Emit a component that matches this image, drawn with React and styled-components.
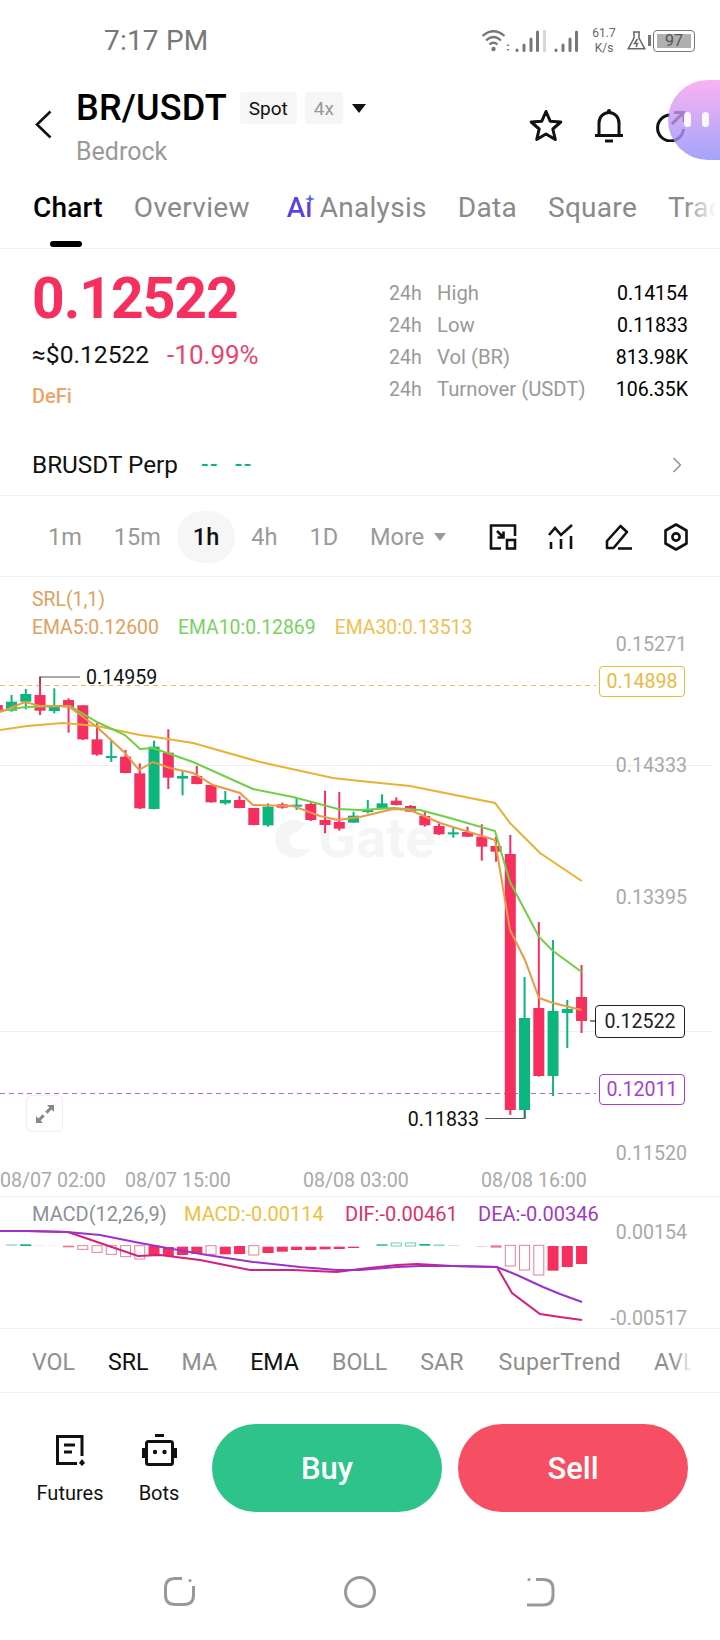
import React from 'react';
import styled, { createGlobalStyle } from 'styled-components';

const GlobalStyle = createGlobalStyle`
  html, body {
    margin: 0;
    padding: 0;
    background: #fff;
  }

  body {
    font-family: Roboto, "Liberation Sans", sans-serif;
    color: #111;
  }

  * {
    box-sizing: border-box;
  }
`;

const RED = '#f72f5e';
const GREEN = '#0cb57e';

const zoomY = (v) => 580 + v / 3;
const candleX = (i) => -2.7 + i * 14.25;

// wick top, body top, body bottom, wick bottom (in 3x crop units), colour
const CANDLES = [
  [375, 375, 392, 392, 'r'], [345, 365, 392, 395, 'g'], [327, 342, 365, 388, 'g'],
  [290, 345, 392, 405, 'r'], [325, 375, 393, 400, 'g'], [355, 360, 382, 458, 'r'],
  [375, 376, 478, 480, 'r'], [430, 478, 524, 527, 'r'], [483, 528, 534, 546, 'g'],
  [510, 530, 579, 580, 'r'], [550, 580, 685, 687, 'r'], [482, 500, 687, 688, 'g'],
  [448, 518, 593, 627, 'r'], [572, 588, 596, 646, 'g'], [558, 588, 612, 613, 'r'],
  [615, 615, 667, 668, 'r'], [633, 660, 670, 674, 'g'], [648, 660, 684, 685, 'r'],
  [684, 684, 735, 736, 'r'], [670, 680, 736, 740, 'g'], [668, 673, 683, 686, 'r'],
  [652, 674, 680, 690, 'g'], [668, 672, 720, 723, 'r'], [632, 720, 735, 760, 'r'],
  [636, 726, 746, 752, 'r'], [695, 707, 728, 728, 'g'], [660, 690, 696, 700, 'g'],
  [643, 670, 686, 688, 'g'], [652, 662, 675, 676, 'r'], [675, 678, 695, 696, 'r'],
  [695, 708, 736, 740, 'r'], [725, 738, 763, 765, 'r'], [742, 757, 761, 773, 'g'],
  [740, 756, 770, 771, 'r'], [733, 770, 800, 842, 'r'], [770, 798, 815, 845, 'r'],
  [765, 822, 1590, 1605, 'r'], [1191, 1314, 1590, 1614, 'g'], [1026, 1284, 1488, 1490, 'r'],
  [1080, 1293, 1488, 1548, 'g'], [1260, 1287, 1299, 1404, 'g'], [1155, 1251, 1323, 1359, 'r'],
];

const pts = (list) => list.map(([x, y]) => `${x},${y}`).join(' ');

const EMA30 = [
  [0, 730], [27, 726], [63, 723], [97, 726], [140, 735], [155, 737], [193, 743], [260, 762],
  [333, 778], [360, 781], [410, 786], [495, 803], [510, 823], [540, 853], [581.7, 881],
];
const EMA10 = [
  [0, 711], [25, 707], [70, 706], [97, 722], [125, 735], [140, 749], [153, 748], [193, 762],
  [233, 780], [253, 789], [293, 797], [338, 809], [360, 810], [393, 808], [420, 810], [450, 818],
  [495, 831], [510, 882], [539, 937], [553, 951], [581.7, 972],
];
const EMA5 = [
  [0, 712], [25, 702], [40, 706], [68, 706], [97, 727], [125, 753], [139, 770], [153, 762],
  [170, 768], [193, 773], [213, 785], [240, 793], [253, 805], [293, 806], [320, 816], [338, 820],
  [360, 817], [393, 809], [410, 810], [440, 823], [495, 840], [510, 930], [525, 960], [539, 998],
  [553, 1003], [581.7, 1010],
];

// bar index, top, bottom (in 3x crop units from y=1060), hollow, colour
const MACD_BARS = [
  [1, 554, 556, 0, GREEN], [2, 553, 558, 0, GREEN], [3, 555, 557, 0, '#e8e8e8'], [4, 555, 557, 0, '#e8e8e8'],
  [5, 557, 562, 0, '#e87a90'], [6, 557, 568, 1], [7, 557, 577, 1], [8, 557, 583, 1], [9, 557, 590, 1],
  [10, 557, 597, 1], [11, 557, 585, 0], [12, 561, 588, 0], [13, 560, 585, 0], [14, 560, 582, 0],
  [15, 557, 583, 1], [16, 560, 583, 0], [17, 558, 582, 0], [18, 557, 585, 1], [19, 560, 579, 0],
  [20, 560, 575, 0], [21, 560, 570, 0], [22, 560, 570, 0], [23, 560, 568, 0], [24, 560, 567, 0],
  [25, 560, 564, 0], [27, 553, 557, 0, GREEN], [28, 549, 558, 1, '#6fd0ae'], [29, 549, 558, 1, '#6fd0ae'],
  [30, 552, 557, 0, GREEN], [31, 554, 557, 0, '#45c79c'], [32, 555, 557, 0, '#a9e2cf'], [34, 558, 560, 0, '#efb3c0'],
  [35, 556, 563, 0, '#e87a90'], [36, 556, 618, 1], [37, 556, 630, 1], [38, 556, 645, 1],
  [39, 558, 632, 0], [40, 558, 621, 0], [41, 558, 612, 0],
];

const DIF = [
  [0, 1231], [27, 1231], [68, 1232], [100, 1243], [138, 1256], [160, 1255], [200, 1260], [250, 1270],
  [293, 1270], [337, 1272], [360, 1269], [397, 1265], [417, 1264], [453, 1266], [497, 1267],
  [512, 1293], [540, 1314], [560, 1317], [582, 1320],
];
const DEA = [
  [0, 1231], [27, 1231], [67, 1232], [100, 1235], [140, 1243], [167, 1248], [207, 1255], [253, 1262],
  [300, 1267], [337, 1270], [360, 1270], [397, 1267], [420, 1266], [453, 1266], [497, 1267],
  [517, 1275], [543, 1287], [560, 1294], [582, 1302],
];

const PRICE_LABELS = [
  ['0.15271', 644], ['0.14333', 765], ['0.13395', 897], ['0.11520', 1153],
];
const TIME_LABELS = [
  ['08/07 02:00', 0], ['08/07 15:00', 125], ['08/08 03:00', 303], ['08/08 16:00', 481],
];

const STATS = [
  ['High', '0.14154'],
  ['Low', '0.11833'],
  ['Vol (BR)', '813.98K'],
  ['Turnover (USDT)', '106.35K'],
];

const App = () => {
  return (
    <Page>
      <GlobalStyle />

      <StatusBar>
        <Clock>7:17 PM</Clock>
        <StatusIcons>
          <WifiIcon />
          <SignalIcon />
          <SignalDivider />
          <SignalIcon />
          <Speed>
            <span>61.7</span>
            <span>K/s</span>
          </Speed>
          <FlaskIcon />
          <Battery>
            <BatteryFill>97</BatteryFill>
          </Battery>
        </StatusIcons>
      </StatusBar>

      <Header>
        <BackIcon />
        <TitleBlock>
          <TitleRow>
            <Title>BR/USDT</Title>
            <Chip>Spot</Chip>
            <Chip $muted>4x</Chip>
            <Caret $size={7} $gap={1} $color='#111' />
          </TitleRow>
          <Subtitle>Bedrock</Subtitle>
        </TitleBlock>
        <HeaderActions>
          <StarIcon />
          <BellIcon />
          <ShareIcon />
        </HeaderActions>
        <Bubble>
          <i />
          <i />
        </Bubble>
      </Header>

      <Tabs>
        <Tab $active>Chart</Tab>
        <Tab>Overview</Tab>
        <Tab $ai>
          <AiMark>
            Aı
            <AiSparkle viewBox='0 0 10 10'>
              <path d='M5 0 L6.2 3.8 L10 5 L6.2 6.2 L5 10 L3.8 6.2 L0 5 L3.8 3.8 Z' />
            </AiSparkle>
          </AiMark>
          Analysis
        </Tab>
        <Tab>Data</Tab>
        <Tab>Square</Tab>
        <Tab>Trade</Tab>
      </Tabs>

      <Summary>
        <PriceBlock>
          <Price>0.12522</Price>
          <PriceSub>
            <span>≈$0.12522</span>
            <Change>-10.99%</Change>
          </PriceSub>
          <Sector>DeFi</Sector>
        </PriceBlock>
        <Stats>
          {STATS.map(([name, value]) => (
            <React.Fragment key={name}>
              <StatLabel>24h</StatLabel>
              <StatName>{name}</StatName>
              <StatValue>{value}</StatValue>
            </React.Fragment>
          ))}
        </Stats>
      </Summary>

      <PerpRow>
        <PerpName>BRUSDT Perp</PerpName>
        <PerpDash>--</PerpDash>
        <PerpDash>--</PerpDash>
        <PerpChevron viewBox='0 0 10 16'>
          <path d='M1.5 1 L8.5 8 L1.5 15' />
        </PerpChevron>
      </PerpRow>

      <Timeframes>
        <Frame>1m</Frame>
        <Frame>15m</Frame>
        <Frame $active>1h</Frame>
        <Frame>4h</Frame>
        <Frame>1D</Frame>
        <Frame>
          More
          <Caret $size={6} $gap={10} $color='#999' />
        </Frame>
        <ChartTools>
          <FitIcon />
          <IndicatorIcon />
          <PenIcon />
          <HexIcon />
        </ChartTools>
      </Timeframes>

      <ChartPane>
        <Legend>
          <LegendLine>
            <LegendItem $color='#e0a05e'>SRL(1,1)</LegendItem>
          </LegendLine>
          <LegendLine>
            <LegendItem $color='#e0a05e'>EMA5:0.12600</LegendItem>
            <LegendItem $color='#78d25f'>EMA10:0.12869</LegendItem>
            <LegendItem $color='#efc14f'>EMA30:0.13513</LegendItem>
          </LegendLine>
        </Legend>

        <ChartSvg viewBox='0 577 720 619'>
          <line x1='0' y1='765.5' x2='712' y2='765.5' stroke='#eeeeee' />
          <line x1='0' y1='1031.5' x2='712' y2='1031.5' stroke='#eeeeee' />

          <g fill='#f4f5f6'>
            <path d='M306 824 A19 19 0 1 0 310 849 L298 849 A8 8 0 1 1 297 832 Z' />
            <text x='318' y='857' fontSize='56' fontWeight='700' fontFamily='Roboto, sans-serif'>Gate</text>
          </g>

          {PRICE_LABELS.map(([label, y]) => (
            <AxisText key={label} x='687' y={y} textAnchor='end' dominantBaseline='central'>{label}</AxisText>
          ))}
          {TIME_LABELS.map(([label, x]) => (
            <AxisText key={label} x={x} y='1180' dominantBaseline='central'>{label}</AxisText>
          ))}

          <line x1='0' y1='685.5' x2='596' y2='685.5' stroke='#eebb48' strokeWidth='1' strokeDasharray='5 4' />
          <line x1='0' y1='1093.5' x2='596' y2='1093.5' stroke='#b565d8' strokeWidth='1' strokeDasharray='5 4' />

          {CANDLES.map(([wt, bt, bb, wb, c], i) => {
            const x = candleX(i);
            const color = c === 'r' ? RED : GREEN;
            return (
              <g key={i} fill={color}>
                <rect x={x - 1} y={zoomY(wt)} width='2' height={(wb - wt) / 3} />
                <rect x={x - 5.5} y={zoomY(bt)} width='11' height={Math.max((bb - bt) / 3, 2)} />
              </g>
            );
          })}

          <polyline points={pts(EMA30)} fill='none' stroke='#e9b235' strokeWidth='2' />
          <polyline points={pts(EMA10)} fill='none' stroke='#6fd044' strokeWidth='2' />
          <polyline points={pts(EMA5)} fill='none' stroke='#ea9a45' strokeWidth='2' />

          <path d='M40 684 V677 H80' fill='none' stroke='#555' strokeWidth='1.2' />
          <DarkText x='86' y='677' dominantBaseline='central'>0.14959</DarkText>
          <path d='M525 1110 V1118.5 H485' fill='none' stroke='#555' strokeWidth='1.2' />
          <DarkText x='479' y='1119' textAnchor='end' dominantBaseline='central'>0.11833</DarkText>
          <line x1='590' y1='1021' x2='595' y2='1021' stroke='#333' strokeWidth='1.2' />
        </ChartSvg>

        <PriceTag $top={89} $left={599} $color='#e8bb3f'>0.14898</PriceTag>
        <PriceTag $top={428} $left={595} $width={90} $color='#222'>0.12522</PriceTag>
        <PriceTag $top={497} $left={599} $color='#a63fd0'>0.12011</PriceTag>

        <ExpandButton>
          <svg width='20' height='20' viewBox='0 0 20 20' fill='#888'>
            <path d='M12 1 H19 V8 L16.6 5.6 L12.4 9.8 L10.2 7.6 L14.4 3.4 Z' />
            <path d='M8 19 H1 V12 L3.4 14.4 L7.6 10.2 L9.8 12.4 L5.6 16.6 Z' />
          </svg>
        </ExpandButton>
      </ChartPane>

      <MacdPane>
        <Legend $top={3}>
          <LegendLine>
            <LegendItem $size={20} $color='#8b9197' $width={152}>MACD(12,26,9)</LegendItem>
            <LegendItem $size={20} $color='#eec03e' $width={161}>MACD:-0.00114</LegendItem>
            <LegendItem $size={20} $color='#d9316c' $width={133}>DIF:-0.00461</LegendItem>
            <LegendItem $size={20} $color='#a139c2'>DEA:-0.00346</LegendItem>
          </LegendLine>
        </Legend>
        <ChartSvg viewBox='0 1197 720 131'>
          <AxisText x='687' y='1232' textAnchor='end' dominantBaseline='central'>0.00154</AxisText>
          <AxisText x='687' y='1318' textAnchor='end' dominantBaseline='central'>-0.00517</AxisText>

          {MACD_BARS.map(([i, top, bottom, hollow, color]) => {
            const x = candleX(i);
            const y = 1060 + top / 3;
            const h = (bottom - top) / 3;
            return hollow ? (
              <rect key={i} x={x - 5} y={y} width='10' height={h} fill='#fff' stroke={color || '#e58195'} strokeWidth='1' />
            ) : (
              <rect key={i} x={x - 5.5} y={y} width='11' height={h} fill={color || RED} />
            );
          })}

          <polyline points={pts(DIF)} fill='none' stroke='#d4207f' strokeWidth='2' />
          <polyline points={pts(DEA)} fill='none' stroke='#9c33c9' strokeWidth='2' />
        </ChartSvg>
      </MacdPane>

      <Indicators>
        <Indicator>VOL</Indicator>
        <Indicator $active>SRL</Indicator>
        <Indicator>MA</Indicator>
        <Indicator $active>EMA</Indicator>
        <Indicator>BOLL</Indicator>
        <Indicator>SAR</Indicator>
        <Indicator $wide>SuperTrend</Indicator>
        <Indicator>AVL</Indicator>
      </Indicators>

      <ActionBar>
        <ToolLink $width={66} $gap={37}>
          <svg width='32' height='32' viewBox='0 0 32 32' fill='none' stroke='#111' strokeWidth='3'>
            <path d='M28 22 V2.5 H3.5 V29.5 H23' />
            <path d='M10 11 H21 M10 18 H18' />
            <path d='M28 25 L31 29 L28 32 L25 29 Z' fill='#111' stroke='none' />
          </svg>
          <span>Futures</span>
        </ToolLink>
        <ToolLink $width={38} $gap={34}>
          <svg width='35' height='32' viewBox='0 0 35 32' fill='none' stroke='#111' strokeWidth='3'>
            <path d='M13 1.5 H22' />
            <rect x='4.5' y='7.5' width='26' height='23' rx='2' />
            <path d='M1.5 14 V24 M33.5 14 V24' />
            <circle cx='13' cy='18' r='2.2' fill='#111' stroke='none' />
            <circle cx='22.5' cy='18' r='2.2' fill='#111' stroke='none' />
          </svg>
          <span>Bots</span>
        </ToolLink>
        <TradeButton $color='#2dc38a'>Buy</TradeButton>
        <TradeButton $color='#f64f63'>Sell</TradeButton>
      </ActionBar>

      <NavBar>
        <NavIcon viewBox='0 0 34 32'>
          <path d='M19 2.5 H12 Q2.5 2.5 2.5 12 V19 Q2.5 28.5 12 28.5 H21 Q30.5 28.5 30.5 19 V10' />
          <circle cx='27' cy='4.5' r='1.5' fill='#999' stroke='none' />
        </NavIcon>
        <NavIcon viewBox='0 0 34 32'>
          <circle cx='17' cy='16' r='14.5' />
        </NavIcon>
        <NavIcon viewBox='0 0 34 32'>
          <path d='M13 3.5 H20 Q30 3.5 30 13 V19 Q30 29 20 29 H4' />
          <circle cx='6' cy='3.5' r='1.5' fill='#999' stroke='none' />
        </NavIcon>
      </NavBar>
    </Page>
  );
};

const WifiIcon = () => (
  <svg width='29' height='23' viewBox='0 0 29 23' fill='none' stroke='#777' strokeWidth='2.2'>
    <path d='M0.5 7 Q11.5 -2.5 22.5 7' />
    <path d='M4 11.5 Q11.5 4.5 19 11.5' />
    <path d='M7.5 15.5 Q11.5 12 15.5 15.5' />
    <circle cx='11.5' cy='20' r='2.2' fill='#777' stroke='none' />
    <path d='M26 15 L27.5 17 H24.5 Z M26 22 L27.5 20 H24.5 Z' fill='#777' stroke='none' />
  </svg>
);

const SignalIcon = () => (
  <svg width='24' height='22' viewBox='0 0 24 22' fill='none' stroke='#777' strokeWidth='3' strokeLinecap='round'>
    <path d='M2 20 V20.5 M9 15 V20.5 M16 9 V20.5 M22.5 2 V20.5' />
  </svg>
);

const FlaskIcon = () => (
  <svg width='19' height='19' viewBox='0 0 19 19' fill='none' stroke='#666' strokeWidth='1.5' style={{ marginRight: 3 }}>
    <path d='M6 1 H13 M7 1 V7 L1.2 17.8 H17.8 L12 7 V1' />
    <path d='M10.5 8 L7.5 12.5 H10.5 L9 16' />
  </svg>
);

const BackIcon = () => (
  <svg width='17' height='29' viewBox='0 0 17 29' fill='none' stroke='#111' strokeWidth='2.6' style={{ marginTop: 18, flexShrink: 0 }}>
    <path d='M15.5 1.5 L2 14.5 L15.5 27.5' />
  </svg>
);

const StarIcon = () => (
  <svg width='34' height='33' viewBox='0 0 34 33' fill='none' stroke='#111' strokeWidth='3' strokeLinejoin='round'>
    <path d='M17 2.5 L21.2 12.2 L31.8 13 L23.8 20 L26.3 30.5 L17 25 L7.7 30.5 L10.2 20 L2.2 13 L12.8 12.2 Z' />
  </svg>
);

const BellIcon = () => (
  <svg width='30' height='35' viewBox='0 0 30 35' fill='none' stroke='#111' strokeWidth='3'>
    <path d='M1 27.5 H29' />
    <path d='M5 27.5 V15 A10 10.5 0 0 1 25 15 V27.5' />
    <path d='M11 33 H19' />
    <circle cx='15' cy='3' r='2' fill='#111' stroke='none' />
  </svg>
);

const ShareIcon = () => (
  <svg width='32' height='32' viewBox='0 0 32 32' fill='none' stroke='#111' strokeWidth='3'>
    <path d='M15 5 A13 13 0 1 0 28.5 19' />
    <path d='M17 14 L28 3 M19 2.5 H29 V12' />
  </svg>
);

const FitIcon = () => (
  <svg width='28' height='26' viewBox='0 0 28 26' fill='none' stroke='#111' strokeWidth='2.6'>
    <path d='M12 24.5 H2 V1.5 H26 V12' />
    <path d='M8 7 L14 13 M14.5 7.5 V13.5 H8.5' />
    <rect x='18' y='16' width='8' height='8.5' />
  </svg>
);

const IndicatorIcon = () => (
  <svg width='28' height='26' viewBox='0 0 28 26' fill='none' stroke='#111' strokeWidth='2.6'>
    <path d='M2 11 L8 4 L14 11 L25 1' />
    <path d='M4 18 V25 M14 15 V25 M24 12 V25' />
  </svg>
);

const PenIcon = () => (
  <svg width='28' height='26' viewBox='0 0 28 26' fill='none' stroke='#111' strokeWidth='2.6' strokeLinejoin='round'>
    <path d='M2 24 V17 L15.5 2 L22 8 L8.5 24 Z' />
    <path d='M13 24.5 H27' />
  </svg>
);

const HexIcon = () => (
  <svg width='26' height='28' viewBox='0 0 26 28' fill='none' stroke='#111' strokeWidth='2.6' strokeLinejoin='round'>
    <path d='M13 1.5 L23.5 7.5 V20.5 L13 26.5 L2.5 20.5 V7.5 Z' />
    <circle cx='13' cy='14' r='3.6' />
  </svg>
);

const Page = styled.div`
  width: 720px;
  height: 1640px;
  overflow: hidden;
  background: #fff;
`;

const StatusBar = styled.div`
  display: flex;
  align-items: center;
  height: 75px;
  padding: 6px 25px 0 104px;
  color: #777;
`;

const Clock = styled.div`
  font-size: 28px;
  letter-spacing: 0.2px;
`;

const StatusIcons = styled.div`
  display: flex;
  align-items: center;
  margin-left: auto;
  gap: 4px;
`;

const SignalDivider = styled.span`
  width: 3px;
  height: 22px;
  margin: 0 4px 0 0;
  background: #d8d8d8;
`;

const Speed = styled.div`
  display: flex;
  flex-direction: column;
  align-items: center;
  width: 36px;
  margin: 0 1px 0 4px;
  font-size: 12px;
  line-height: 15px;
  color: #666;
`;

const Battery = styled.div`
  display: flex;
  width: 42px;
  height: 22px;
  padding: 3px;
  border: 1.5px solid #777;
  border-radius: 4px;
  position: relative;

  &::before {
    content: '';
    position: absolute;
    left: -6px;
    top: 4px;
    width: 3px;
    height: 11px;
    background: #777;
  }
`;

const BatteryFill = styled.div`
  flex: 1;
  background: #b0b0b0;
  font-size: 16px;
  line-height: 14px;
  text-align: center;
  color: #555;
`;

const Header = styled.div`
  display: flex;
  position: relative;
  height: 95px;
  padding: 17px 33px 0 35px;
`;

const TitleBlock = styled.div`
  margin-left: 24px;
`;

const TitleRow = styled.div`
  display: flex;
  align-items: center;
  height: 32px;
`;

const Title = styled.h1`
  margin: 0 13px 0 0;
  font-size: 36px;
  font-weight: 500;
  line-height: 32px;
  letter-spacing: 0.2px;
  color: #000;
`;

const Chip = styled.span`
  display: flex;
  align-items: center;
  height: 32px;
  margin-right: 8px;
  padding: 0 9px;
  background: #f6f6f6;
  border-radius: 3px;
  font-size: 19px;
  color: ${(p) => (p.$muted ? '#999' : '#111')};
`;

const Caret = styled.span`
  display: inline-block;
  width: 0;
  height: 0;
  margin-left: ${(p) => p.$gap}px;
  border-left: ${(p) => p.$size}px solid transparent;
  border-right: ${(p) => p.$size}px solid transparent;
  border-top: ${(p) => p.$size + 2}px solid ${(p) => p.$color};
  vertical-align: middle;
`;

const Subtitle = styled.div`
  margin-top: 14px;
  font-size: 25px;
  line-height: 28px;
  color: #999;
`;

const HeaderActions = styled.div`
  display: flex;
  align-items: center;
  gap: 31px;
  height: 35px;
  margin: 16px 0 0 auto;
`;

const Bubble = styled.div`
  position: absolute;
  right: 0;
  top: 5px;
  display: flex;
  align-items: center;
  gap: 11px;
  width: 52px;
  height: 80px;
  padding-left: 16px;
  border-radius: 40px 0 0 40px;
  background: linear-gradient(180deg, rgba(247, 160, 238, 0.8), rgba(140, 142, 250, 0.8));

  i {
    width: 7px;
    height: 15px;
    margin-top: -1px;
    border-radius: 4px;
    background: rgba(255, 255, 255, 0.9);
  }
`;

const Tabs = styled.div`
  display: flex;
  position: relative;
  align-items: center;
  gap: 31px;
  height: 79px;
  padding: 0 0 3px 33px;
  border-bottom: 1px solid #f2f2f2;
  overflow: hidden;
  white-space: nowrap;

  &::after {
    content: '';
    position: absolute;
    right: 0;
    top: 0;
    bottom: 0;
    width: 36px;
    background: linear-gradient(90deg, rgba(255, 255, 255, 0), #fff 90%);
  }
`;

const Tab = styled.div`
  display: flex;
  position: relative;
  align-items: center;
  flex-shrink: 0;
  margin-left: ${(p) => (p.$ai ? '6px' : '0')};
  font-size: 28px;
  font-weight: ${(p) => (p.$active ? 500 : 400)};
  letter-spacing: ${(p) => (p.$active ? '0.2px' : '0.3px')};
  color: ${(p) => (p.$active ? '#000' : '#8a8a8a')};

  &::after {
    content: '';
    display: ${(p) => (p.$active ? 'block' : 'none')};
    position: absolute;
    left: 17px;
    bottom: -23px;
    width: 32px;
    height: 6px;
    border-radius: 3px;
    background: #000;
  }
`;

const AiMark = styled.span`
  position: relative;
  margin-right: 7px;
  font-weight: 500;
  letter-spacing: 0;
  background: linear-gradient(135deg, #4f46e5, #6d3adf);
  -webkit-background-clip: text;
  background-clip: text;
  color: transparent;
`;

const AiSparkle = styled.svg`
  position: absolute;
  right: -2px;
  top: 3px;
  width: 10px;
  height: 10px;
  fill: #4d6ae8;
`;

const Summary = styled.div`
  display: flex;
  justify-content: space-between;
  height: 186px;
  padding: 20px 32px 0;
`;

const PriceBlock = styled.div`
  display: flex;
  flex-direction: column;
`;

const Price = styled.div`
  font-size: 57px;
  font-weight: 700;
  line-height: 60px;
  letter-spacing: -1px;
  color: ${RED};
`;

const PriceSub = styled.div`
  display: flex;
  align-items: center;
  gap: 18px;
  margin-top: 12px;
  font-size: 24.6px;
  line-height: 28px;
`;

const Change = styled.span`
  font-size: 26px;
  color: #e8466f;
`;

const Sector = styled.div`
  margin-top: 15px;
  font-size: 20px;
  line-height: 24px;
  font-weight: 500;
  color: #eca568;
`;

const Stats = styled.div`
  display: grid;
  grid-template-columns: 48px 1fr auto;
  grid-auto-rows: 32px;
  align-items: center;
  width: 299px;
  margin-top: 8px;
  font-size: 19.5px;
`;

const StatLabel = styled.span`
  color: #999;
`;

const StatName = styled.span`
  font-size: 20.3px;
  white-space: nowrap;
  color: #999;
`;

const StatValue = styled.span`
  text-align: right;
  color: #000;
`;

const PerpRow = styled.div`
  display: flex;
  align-items: center;
  gap: 16px;
  height: 61px;
  padding: 0 38px 1px 32px;
  border-bottom: 1px solid #f2f2f2;
`;

const PerpName = styled.span`
  margin-right: 7px;
  font-size: 24.3px;
`;

const PerpDash = styled.span`
  font-size: 22px;
  font-weight: 500;
  letter-spacing: 1.5px;
  color: ${GREEN};
`;

const PerpChevron = styled.svg`
  width: 10px;
  height: 16px;
  margin-left: auto;
  fill: none;
  stroke: #888;
  stroke-width: 1.3;
`;

const Timeframes = styled.div`
  display: flex;
  align-items: center;
  gap: 0;
  height: 81px;
  padding: 1px 31px 0 32px;
  border-bottom: 1px solid #f2f2f2;
`;

const Frame = styled.div`
  display: flex;
  align-items: center;
  height: 52px;
  padding: 0 16px;
  border-radius: 26px;
  font-size: 23.5px;
  font-weight: ${(p) => (p.$active ? 500 : 400)};
  color: ${(p) => (p.$active ? '#111' : '#999')};
  background: ${(p) => (p.$active ? '#f6f6f6' : 'transparent')};
`;

const ChartTools = styled.div`
  display: flex;
  align-items: center;
  gap: 30px;
  margin-left: auto;
`;

const ChartPane = styled.div`
  position: relative;
  height: 620px;
  border-bottom: 1px solid #efefef;
`;

const ChartSvg = styled.svg`
  display: block;
  width: 100%;
  height: 100%;
  overflow: visible;
`;

const AxisText = styled.text`
  font-size: 19.6px;
  fill: #a9a9a9;
`;

const DarkText = styled.text`
  font-size: 19.6px;
  fill: #111;
`;

const Legend = styled.div`
  position: absolute;
  left: 32px;
  top: ${(p) => p.$top ?? 8}px;
  z-index: 1;
`;

const LegendLine = styled.div`
  display: flex;
  gap: 19px;
  height: 28px;
  align-items: center;
`;

const LegendItem = styled.span`
  ${(p) => p.$width && `width: ${p.$width}px; margin-right: -19px;`}
  font-size: ${(p) => p.$size ?? 19.4}px;
  white-space: nowrap;
  color: ${(p) => p.$color};
`;

const PriceTag = styled.div`
  position: absolute;
  top: ${(p) => p.$top}px;
  left: ${(p) => p.$left}px;
  display: flex;
  align-items: center;
  justify-content: center;
  width: ${(p) => p.$width ?? 86}px;
  height: ${(p) => (p.$width ? 33 : 31)}px;
  background: #fff;
  border: 1px solid ${(p) => p.$color};
  border-radius: 4px;
  font-size: 19.6px;
  color: ${(p) => p.$color};
`;

const ExpandButton = styled.div`
  position: absolute;
  left: 26px;
  top: 518px;
  display: flex;
  align-items: center;
  justify-content: center;
  width: 37px;
  height: 37px;
  background: #fff;
  border: 1px solid #f0f0f0;
  border-radius: 6px;
  box-shadow: 0 0 2px rgba(0, 0, 0, 0.05);
`;

const MacdPane = styled.div`
  position: relative;
  height: 132px;
  border-bottom: 1px solid #f2f2f2;
`;

const Indicators = styled.div`
  display: flex;
  position: relative;
  align-items: center;
  gap: 33px;
  height: 64px;
  padding: 2px 0 0 32px;
  border-bottom: 1px solid #f2f2f2;
  overflow: hidden;
  white-space: nowrap;

  &::after {
    content: '';
    position: absolute;
    right: 0;
    top: 0;
    bottom: 0;
    width: 46px;
    background: linear-gradient(90deg, rgba(255, 255, 255, 0), #fff 40%);
  }
`;

const Indicator = styled.span`
  margin-left: ${(p) => (p.$wide ? '2px' : '0')};
  font-size: 23.2px;
  letter-spacing: ${(p) => (p.$wide ? '0.4px' : '0')};
  color: ${(p) => (p.$active ? '#111' : '#8f8f8f')};
`;

const ActionBar = styled.div`
  display: flex;
  align-items: flex-start;
  padding: 31px 32px 0 37px;
`;

const ToolLink = styled.div`
  display: flex;
  flex-direction: column;
  align-items: center;
  flex-shrink: 0;
  gap: 15px;
  width: ${(p) => p.$width}px;
  margin: 10px ${(p) => p.$gap}px 0 0;

  span {
    font-size: 20px;
    line-height: 24px;
    color: #111;
  }
`;

const TradeButton = styled.div`
  display: flex;
  align-items: center;
  justify-content: center;
  flex-shrink: 0;
  width: 230px;
  height: 88px;
  margin-right: 16px;
  border-radius: 44px;
  background: ${(p) => p.$color};
  font-size: 31px;
  font-weight: 500;
  color: #fff;

  &:last-child {
    margin-right: 0;
  }
`;

const NavBar = styled.div`
  display: grid;
  grid-template-columns: repeat(3, 180px);
  justify-content: center;
  justify-items: center;
  margin-top: 64px;
`;

const NavIcon = styled.svg`
  width: 34px;
  height: 32px;
  fill: none;
  stroke: #999;
  stroke-width: 3;
`;

export default App;
